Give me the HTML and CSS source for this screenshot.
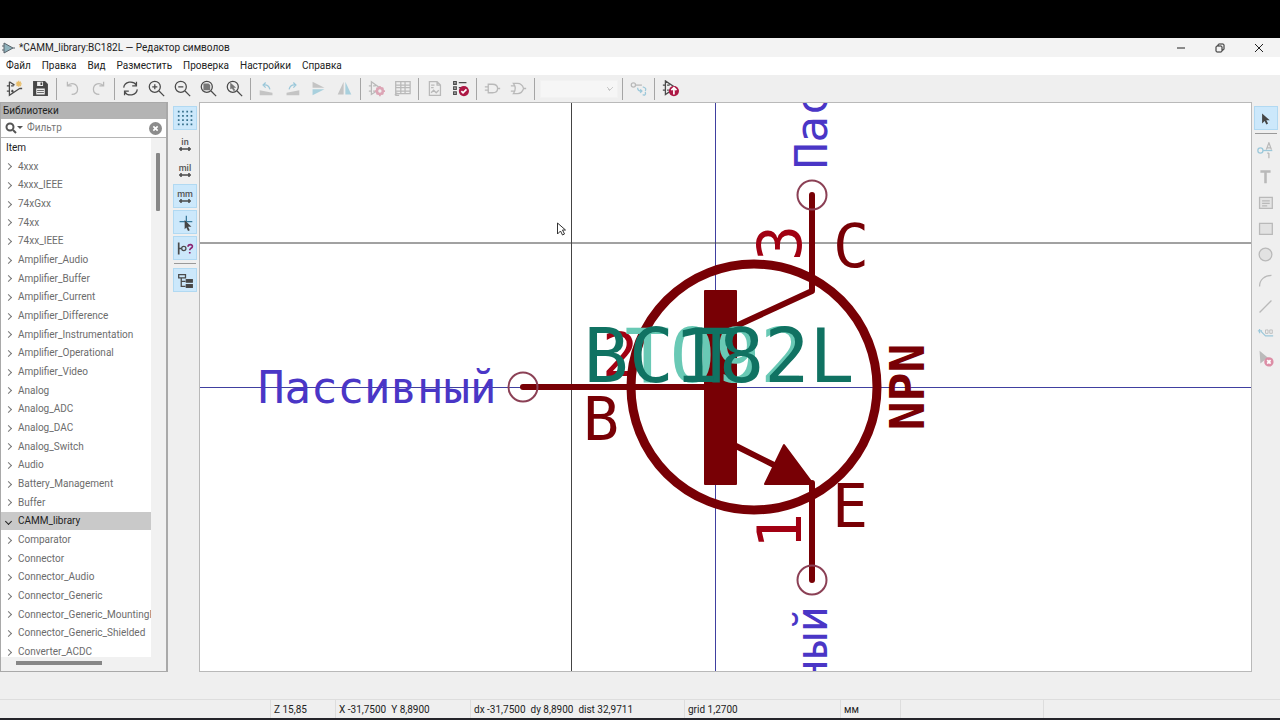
FILE: index.html
```html
<!DOCTYPE html>
<html lang="ru">
<head>
<meta charset="utf-8">
<title>*CAMM_library:BC182L — Редактор символов</title>
<link rel="stylesheet" href="styles.css">
</head>
<body>
<div class="app">
<header class="titlebar">
  <svg class="app-icon" viewBox="0 0 14 14"><path d="M3 2v10l9-5zM1 5h2M1 9h2M12 7h2" fill="#8fb3bd" stroke="#59636b"/></svg>
  <h1 class="title">*CAMM_library:BC182L — Редактор символов</h1>
  <div class="window-buttons">
    <button aria-label="Свернуть"><svg viewBox="0 0 12 12"><path d="M2 6h8"/></svg></button>
    <button aria-label="Восстановить"><svg viewBox="0 0 12 12"><rect x="2" y="4" width="6" height="6" rx="1"/><path d="M4 4V3q0-1 1-1h4q1 0 1 1v4q0 1-1 1H8"/></svg></button>
    <button aria-label="Закрыть"><svg viewBox="0 0 12 12"><path d="M2 2l8 8M10 2l-8 8"/></svg></button>
  </div>
</header>
<nav class="menu">
  <button>Файл</button><button>Правка</button><button>Вид</button><button>Разместить</button><button>Проверка</button><button>Настройки</button><button>Справка</button>
</nav>
<div class="toolbar" role="toolbar">
  <button class="tool" aria-label="Создать символ"><svg viewBox="0 0 20 20"><path d="M4 2v16l12-8M4 2l6 4M1 7h3M1 13h3M16 10h3M6 7h3M6 13h3M7.500 11.500v3"/><path class="gold" d="M15 1v7M11.500 4.500h7M12.500 2l5 5M17.500 2l-5 5"/></svg></button>
  <button class="tool" aria-label="Сохранить"><svg viewBox="0 0 20 20"><path class="solid" d="M2 2h13l3 3v13H2z"/><path fill="#efefef" stroke="none" d="M6 2h7v5H6zM5 10h10v7H5z"/><path class="solid" stroke="none" d="M10 3h2v3h-2zM6 12h8v1H6zM6 14h8v1H6z"/></svg></button>
  <span class="sep"></span>
  <button class="tool off" aria-label="Отменить"><svg viewBox="0 0 20 20"><path d="M4 2v5h5M4 7c4-5 12-3 12 4 0 4-3 6-7 6"/></svg></button>
  <button class="tool off" aria-label="Повторить"><svg viewBox="0 0 20 20"><path d="M16 2v5h-5M16 7C12 2 4 4 4 11c0 4 3 6 7 6"/></svg></button>
  <span class="sep"></span>
  <button class="tool" aria-label="Обновить"><svg viewBox="0 0 20 20"><path d="M2 9c1-7 11-9 15-3M17 2v5h-5M18 11c-1 7-11 9-15 3M3 18v-5h5"/></svg></button>
  <button class="tool" aria-label="Увеличить"><svg viewBox="0 0 20 20"><circle cx="8" cy="8" r="6.500"/><path d="M5 8h6M8 5v6M13 13l6 6"/></svg></button>
  <button class="tool" aria-label="Уменьшить"><svg viewBox="0 0 20 20"><circle cx="8" cy="8" r="6.500"/><path d="M5 8h6M13 13l6 6"/></svg></button>
  <button class="tool" aria-label="Вписать лист"><svg viewBox="0 0 20 20"><circle cx="8" cy="8" r="6.500"/><path d="M13 13l6 6"/><path fill="#777" stroke="none" d="M4 4h6l2 2v6H4z"/></svg></button>
  <button class="tool" aria-label="Вписать выделение"><svg viewBox="0 0 20 20"><circle cx="8" cy="8" r="6.500"/><path d="M13 13l6 6"/><path fill="#777" stroke="none" d="M5 3l7 6H9l2 3-2 1-2-3-2 1z"/></svg></button>
  <span class="sep"></span>
  <button class="tool off" aria-label="Повернуть влево"><svg viewBox="0 0 20 20"><path fill="#c4c4c4" stroke="none" d="M2 12l15 3v3H2z"/><path class="blue" d="M9 3L6 6l3 3M6 6c5-1 7 1 8 5"/></svg></button>
  <button class="tool off" aria-label="Повернуть вправо"><svg viewBox="0 0 20 20"><path fill="#c4c4c4" stroke="none" d="M18 12L3 15v3h15z"/><path class="blue" d="M11 3l3 3-3 3M14 6C9 5 7 7 6 11"/></svg></button>
  <button class="tool off" aria-label="Отразить по вертикали"><svg viewBox="0 0 20 20"><path fill="#c4c4c4" stroke="none" d="M3 2l14 7H3z"/><path fill="#a9d0dd" stroke="none" d="M3 18l14-7H3z"/></svg></button>
  <button class="tool off" aria-label="Отразить по горизонтали"><svg viewBox="0 0 20 20"><path fill="#c4c4c4" stroke="none" d="M2 17L9 2v15z"/><path fill="#a9d0dd" stroke="none" d="M18 17L11 2v15z"/></svg></button>
  <span class="sep"></span>
  <button class="tool off" aria-label="Свойства символа"><svg viewBox="0 0 20 20"><path d="M4 2v15l11-7zM1 7h3M1 13h3M6 7h3M6 13h2"/><circle cx="14" cy="13" r="3.500" stroke="#dca5b5" stroke-width="3" fill="#efefef"/><path stroke="#dca5b5" stroke-width="2" d="M14 7v2M14 17v2M8 13h2M18 13h2M10 9l1 1M18 17l-1-1M18 9l-1 1M10 17l1-1"/></svg></button>
  <button class="tool off" aria-label="Таблица выводов"><svg viewBox="0 0 20 20"><path d="M2 2h17v14H2zM2 6h17M2 9h17M2 13h17M8 2v14M13 2v14M2 18h4M4 15l-3 3"/></svg></button>
  <span class="sep"></span>
  <button class="tool off" aria-label="Документация"><svg viewBox="0 0 20 20"><path d="M4 2h9l4 4v12H4zM13 2v4h4M6 6h4M6 9h3M6 15l3-3 3 3 3-3"/></svg></button>
  <button class="tool" aria-label="Проверка символа"><svg viewBox="0 0 20 20"><path d="M2 2h3v3H2zM2 8h3v3H2zM2 14h3v3H2zM8 3h9M8 9h3"/><circle cx="14" cy="13" r="6" fill="#ad1845" stroke="none"/><path stroke="#fff" stroke-width="2" d="M11 13l2 2 4-4"/></svg></button>
  <span class="sep"></span>
  <button class="tool off" aria-label="Стандарт ДеМорган"><svg viewBox="0 0 20 20"><path d="M5 5h5c8 0 8 10 0 10H5zM1 8h4M1 12h4M16 10h3"/></svg></button>
  <button class="tool off" aria-label="Альтернатива ДеМорган"><svg viewBox="0 0 20 20"><path d="M4 4h5c4 0 6 3 7 6-1 3-3 6-7 6H4c3-4 3-8 0-12zM1 7h5M1 13h5M16 10h3"/></svg></button>
  <span class="sep"></span>
  <select class="unit" aria-label="Элемент" disabled><option></option></select>
  <span class="sep"></span>
  <button class="tool off" aria-label="Синхронизация выводов"><svg viewBox="0 0 20 20"><circle cx="4" cy="6" r="2.500"/><path d="M7 6h7"/><path class="blue" d="M9 9c0 3 1 4 4 4M15 8c4 1 4 3 3 5M12 11l2 2-2 2M15 17c2 2 4 0 3-3"/></svg></button>
  <span class="sep"></span>
  <button class="tool" aria-label="Добавить в схему"><svg viewBox="0 0 20 20"><path d="M4 1v16l12-8zM1 6h3M1 12h3M6 6h3M6 12h2"/><circle cx="14" cy="13" r="6" fill="#ad1845" stroke="none"/><path stroke="#fff" stroke-width="2" d="M14 17v-7M11 12l3-3 3 3"/></svg></button>
</div>
<main class="work">
  <aside class="library">
    <h2 class="caption">Библиотеки</h2>
    <div class="search">
      <svg class="search-icon" viewBox="0 0 18 12"><circle cx="5" cy="5" r="3.500"/><path d="M8 8l3 3"/><path class="arrow" d="M12 4h6l-3 3z"/></svg>
      <input type="text" placeholder="Фильтр" aria-label="Фильтр">
      <button class="clear" aria-label="Очистить"><svg viewBox="0 0 12 12"><circle cx="6" cy="6" r="6"/><path d="M4 4l4 4M8 4l-4 4"/></svg></button>
    </div>
    <div class="tree">
      <div class="tree-view">
        <div class="tree-head">Item</div>
        <div class="tree-clip">
        <ul class="rows">
          <li>4xxx</li><li>4xxx_IEEE</li><li>74xGxx</li><li>74xx</li><li>74xx_IEEE</li>
          <li>Amplifier_Audio</li><li>Amplifier_Buffer</li><li>Amplifier_Current</li><li>Amplifier_Difference</li><li>Amplifier_Instrumentation</li><li>Amplifier_Operational</li><li>Amplifier_Video</li>
          <li>Analog</li><li>Analog_ADC</li><li>Analog_DAC</li><li>Analog_Switch</li><li>Audio</li><li>Battery_Management</li><li>Buffer</li>
          <li class="open">CAMM_library</li>
          <li>Comparator</li><li>Connector</li><li>Connector_Audio</li><li>Connector_Generic</li><li>Connector_Generic_MountingPin</li><li>Connector_Generic_Shielded</li><li>Converter_ACDC</li>
        </ul>
        </div>
      </div>
      <div class="vscroll"><span class="thumb"></span></div>
      <div class="hscroll"><span class="thumb"></span></div>
    </div>
  </aside>
  <div class="side left" role="toolbar">
    <button class="tool on" aria-label="Сетка"><svg viewBox="0 0 20 20"><path d="M1 2h18M1 7h18M1 12h18M1 17h18" stroke="#356f8b" stroke-width="2" stroke-dasharray="2 3"/></svg></button>
    <button class="tool units">in<svg viewBox="0 0 14 4"><path d="M1 2h12M3 0v4M11 0v4"/></svg></button>
    <button class="tool units">mil<svg viewBox="0 0 14 4"><path d="M1 2h12M3 0v4M11 0v4"/></svg></button>
    <button class="tool units on">mm<svg viewBox="0 0 14 4"><path d="M1 2h12M3 0v4M11 0v4"/></svg></button>
    <button class="tool on" aria-label="Курсор"><svg viewBox="0 0 20 20"><path stroke="#39799a" d="M3 9h15M11 2v12"/><path class="solid" stroke="none" d="M9 7l8 8h-4l2 4-2 1-2-4-2 2z"/></svg></button>
    <button class="tool on" aria-label="Электрический тип"><svg viewBox="0 0 20 20"><path stroke-width="2" d="M2 3v14M2 10h3"/><circle cx="8" cy="10" r="2.500"/><path stroke="#8b2572" stroke-width="2" d="M13 8c0-4 6-3 5 0-1 2-3 2-3 4M15 14v2"/></svg></button>
    <span class="sep"></span>
    <button class="tool on" aria-label="Дерево символов"><svg viewBox="0 0 20 20"><path d="M2 3h8v4H2zM5 7v10h5M5 11h5"/><path class="solid" d="M11 9h7v3h-7zM11 15h7v3h-7z"/></svg></button>
  </div>
  <svg class="canvas" viewBox="200 103 1051 568" preserveAspectRatio="xMidYMid slice">
    <path class="axis" d="M0 387.500h1600M715.500 0v900"/>
    <path class="crosshair" d="M0 243h1600M571.500 0v900"/>
    <g class="pin-type">
      <text x="258" y="403">Пассивный</text>
      <text transform="translate(827 169) rotate(-90)">Пассивный</text>
      <text transform="translate(827 606) rotate(-90)" text-anchor="end">Пассивный</text>
    </g>
    <g class="pin-number">
      <text x="602" y="376">2</text>
      <text transform="translate(801 261) rotate(-90)">3</text>
      <text transform="translate(801 549) rotate(-90)">1</text>
    </g>
    <g class="body">
      <circle cx="754" cy="387" r="123"/>
      <rect x="705" y="291" width="31" height="193"/>
      <path class="wire" d="M736 326l76-35v-96M523 387h182M736 446l40 20M812 483v97"/>
      <path class="fill" d="M784 445l-19 39h48z"/>
    </g>
    <g class="pin-end"><circle cx="523" cy="387" r="14.500"/><circle cx="812" cy="195" r="14.500"/><circle cx="812" cy="580" r="14.500"/></g>
    <g class="pin-name">
      <text x="583" y="440">B</text><text x="833" y="267">C</text><text x="832" y="527">E</text>
    </g>
    <text class="polarity" transform="translate(924 387) rotate(-90)">NPN</text>
    <g class="field">
      <text class="footprint" x="715" y="382">TO92</text>
      <text x="716" y="382">T</text>
      <text x="719" y="382">BC182L</text>
    </g>
    <path class="pointer" d="M557.500 223v11l3-3 2 4 2-1-2-4h3z"/>
  </svg>
  <div class="side right" role="toolbar">
    <button class="tool on" aria-label="Выбор"><svg viewBox="0 0 20 20"><path class="solid" stroke="none" d="M6 4l9 8h-4l2 4-2 1-2-4-3 3z"/></svg></button>
    <span class="sep"></span>
    <button class="tool off" aria-label="Добавить вывод"><svg viewBox="0 0 20 20"><circle class="blue" cx="4" cy="10" r="3"/><path class="blue" d="M7 10h11"/><path d="M11 9l3-8 3 8M12 7h4M14 13v6M12 13h2"/></svg></button>
    <button class="tool off" aria-label="Текст"><svg viewBox="0 0 20 20"><path stroke-width="3" d="M4 4h12M10 4v14"/></svg></button>
    <button class="tool off" aria-label="Текстовое поле"><svg viewBox="0 0 20 20"><path fill="#e4e4e4" d="M3 4h15v13H3z"/><path d="M6 8h9M6 11h9M6 14h6"/></svg></button>
    <button class="tool off" aria-label="Прямоугольник"><svg viewBox="0 0 20 20"><path fill="#e2e2e2" d="M3 4h15v13H3z"/></svg></button>
    <button class="tool off" aria-label="Окружность"><svg viewBox="0 0 20 20"><circle cx="10" cy="10" r="7.500" fill="#e2e2e2"/></svg></button>
    <button class="tool off" aria-label="Дуга"><svg viewBox="0 0 20 20"><path d="M3 17C3 9 9 4 17 4"/></svg></button>
    <button class="tool off" aria-label="Линия"><svg viewBox="0 0 20 20"><path d="M3 17L17 3"/></svg></button>
    <button class="tool off" aria-label="Якорь"><svg viewBox="0 0 20 20"><path class="blue" d="M1 8h5M3 6v5M5 9l5 5h9"/><path stroke-width="1" d="M10 7h3v4h-3zM15 7h3v4h-3z"/></svg></button>
    <button class="tool off" aria-label="Удалить"><svg viewBox="0 0 20 20"><path fill="#bababa" stroke="none" d="M3 1l12 10h-5l-6 5z"/><circle cx="14" cy="14" r="5.500" fill="#dc8da5" stroke="none"/><path stroke="#fff" stroke-width="2" d="M12 12l4 4M16 12l-4 4"/></svg></button>
  </div>
</main>
<div class="messages"></div>
<footer class="status">
  <span></span><span>Z 15,85</span><span>X -31,7500&nbsp; Y 8,8900</span><span>dx -31,7500&nbsp; dy 8,8900&nbsp; dist 32,9711</span><span>grid 1,2700</span><span>мм</span><span></span><span></span>
</footer>
</div>
</body>
</html>
```
FILE: styles.css
```css
* { box-sizing: border-box; }
body { margin: 0; background: #000; }
.app {
  display: flex; flex-direction: column; height: 100vh;
  border-top: 38px solid #000; border-bottom: 2px solid #24242a;
  background: #efefef; color: #222;
  font: 10px/16px Roboto, "Open Sans", sans-serif;
}
button { border: 0; padding: 0; background: none; font: inherit; color: inherit; }
svg { display: block; fill: none; stroke: #4b4b4b; }

.titlebar { display: flex; align-items: center; height: 19px; flex: none; padding: 0 2px 0 1px; background: #f3f3f3; }
.app-icon { width: 14px; height: 14px; }
.title { margin: 0 0 0 4px; flex: 1; font-size: 10px; font-weight: 400; }
.window-buttons { display: flex; }
.window-buttons button { width: 39px; display: flex; justify-content: center; }
.window-buttons svg { width: 12px; height: 12px; stroke: #222; }

.menu { display: flex; gap: 11px; height: 18px; flex: none; padding-left: 6px; background: #fff; }

.toolbar { display: flex; align-items: center; height: 27px; flex: none; padding-left: 1px; }
.tool { width: 26px; height: 26px; flex: none; display: flex; align-items: center; justify-content: center; }
.tool svg { width: 17px; height: 17px; stroke-width: 1.5; }
.off svg { stroke: #b9b9b9; }
.tool .blue { stroke: #9cc8da; }
.tool .gold { stroke: #e9bd68; }
.tool .solid { fill: #454545; }
.toolbar .sep { flex: none; width: 1px; height: 22px; margin: 0 2px 0 3px; background: #a5a5a5; }
.unit {
  flex: none; width: 78px; height: 18px; margin: 0 1px 0 3px; border: 1px solid #f4f4f4;
  appearance: none; background-color: #f9f9f9; font: inherit;
  background-image: linear-gradient(45deg, transparent 50%, #bbb 50%, #bbb 64%, transparent 64%), linear-gradient(-45deg, transparent 50%, #bbb 50%, #bbb 64%, transparent 64%);
  background-size: 4px 4px; background-position: right 7px center, right 3px center; background-repeat: no-repeat;
}

.work { flex: 1; min-height: 0; display: flex; }
.library { width: 168px; flex: none; display: flex; flex-direction: column; border: 1px solid #a9a9a9; border-right-width: 2px; background: #fff; }
.caption { margin: 0; height: 16px; flex: none; padding-left: 2px; background: #b4b4b4; font-size: 10px; line-height: 16px; font-weight: 400; }
.search { display: flex; align-items: center; height: 19px; flex: none; padding: 0 4px; gap: 4px; border-bottom: 1px solid #b5b5b5; }
.search-icon { width: 18px; height: 12px; stroke: #555; stroke-width: 2; }
.search-icon .arrow { fill: #555; stroke: none; }
.search input { flex: 1; min-width: 0; border: 0; padding: 0; outline: 0; background: none; font: inherit; color: #555; }
.search input::placeholder { color: #777; opacity: 1; }
.clear svg { width: 13px; height: 13px; fill: #8c8c8c; stroke: #fff; stroke-width: 1.5; }
.clear circle { stroke: none; }
.tree { flex: 1; min-height: 0; display: grid; grid-template: minmax(0, 1fr) 14px / minmax(0, 1fr) 15px; }
.tree-view { min-height: 0; display: flex; flex-direction: column; }
.tree-head { height: 19px; flex: none; padding: 2px 0 0 5px; }
.tree-clip { flex: 1; min-height: 0; overflow: hidden; }
.rows { margin: 0; padding: 0; list-style: none; height: calc(100% + 4px); display: grid; grid-auto-rows: minmax(0, 1fr); color: #6c6c6c; }
.rows li { display: flex; align-items: center; gap: 7px; overflow: hidden; white-space: nowrap; padding: 1px 0 0 5px; }
.rows li::before { content: ""; flex: none; width: 4px; height: 4px; border: solid #777; border-width: 1px 1px 0 0; transform: rotate(45deg); }
.rows .open { background: #c9c9c9; color: #222; }
.rows .open::before { border-color: #222; transform: rotate(135deg); }
.vscroll, .hscroll { background: #f1f1f1; }
.vscroll .thumb { display: block; width: 4px; height: 58px; margin: 15px 0 0 5px; background: #878787; border-radius: 1px; }
.hscroll { grid-column: 1 / 3; }
.hscroll .thumb { display: block; width: 86px; height: 4px; margin: 4px 0 0 15px; background: #878787; }

.side { flex: none; display: flex; flex-direction: column; align-items: center; padding-top: 3px; }
.left { width: 31px; padding-left: 3px; }
.right { width: 28px; padding-right: 1px; }
.side .on { width: 24px; height: 24px; margin: 1px 0; background: #cce8fb; border: 1px solid #b1d9f2; }
.side .sep { width: 22px; height: 1px; margin: 2px 0 3px; background: #999; flex: none; }
.side .units { flex-direction: column; font-size: 9px; line-height: 9px; font-weight: 500; color: #555; }
.side .units svg { width: 14px; height: 4px; }
.canvas { flex: 1; min-width: 0; height: 100%; background: #fff; border: 1px solid #b9b9b9; }

.axis { stroke: #4040a0; }
.crosshair { stroke: #444; }
.canvas text { stroke: none; font-family: "DejaVu Sans Mono", monospace; }
.pin-type { fill: #4a36c6; font-size: 44px; }
.pin-number { fill: #a10012; font-size: 60px; }
.pin-name { fill: #780005; font-size: 60px; }
.polarity { fill: #780005; font-size: 48px; font-weight: 700; text-anchor: middle; }
.body { stroke: #780005; stroke-linecap: round; stroke-linejoin: round; }
.body circle { stroke-width: 9; }
.body rect, .body .fill { fill: #780005; stroke-width: 2; }
.wire { stroke-width: 6; }
.pin-end { stroke: #8b4055; stroke-width: 2; }
.field { fill: #107262; font-size: 75px; text-anchor: middle; }
.field .footprint { fill: #69c9b5; }
.pointer { fill: #fff; stroke: #333; }

.messages { height: 28px; flex: none; border-bottom: 1px solid #ddd; }
.status { height: 18px; flex: none; display: grid; grid-template: 18px / 271px 65px 135px 214px 156px 60px 143px 1fr; line-height: 18px; }
.status span { border-right: 1px solid #ddd; padding: 1px 0 0 3px; white-space: nowrap; overflow: hidden; }
.status span:last-child { border-right: 0; }
```
